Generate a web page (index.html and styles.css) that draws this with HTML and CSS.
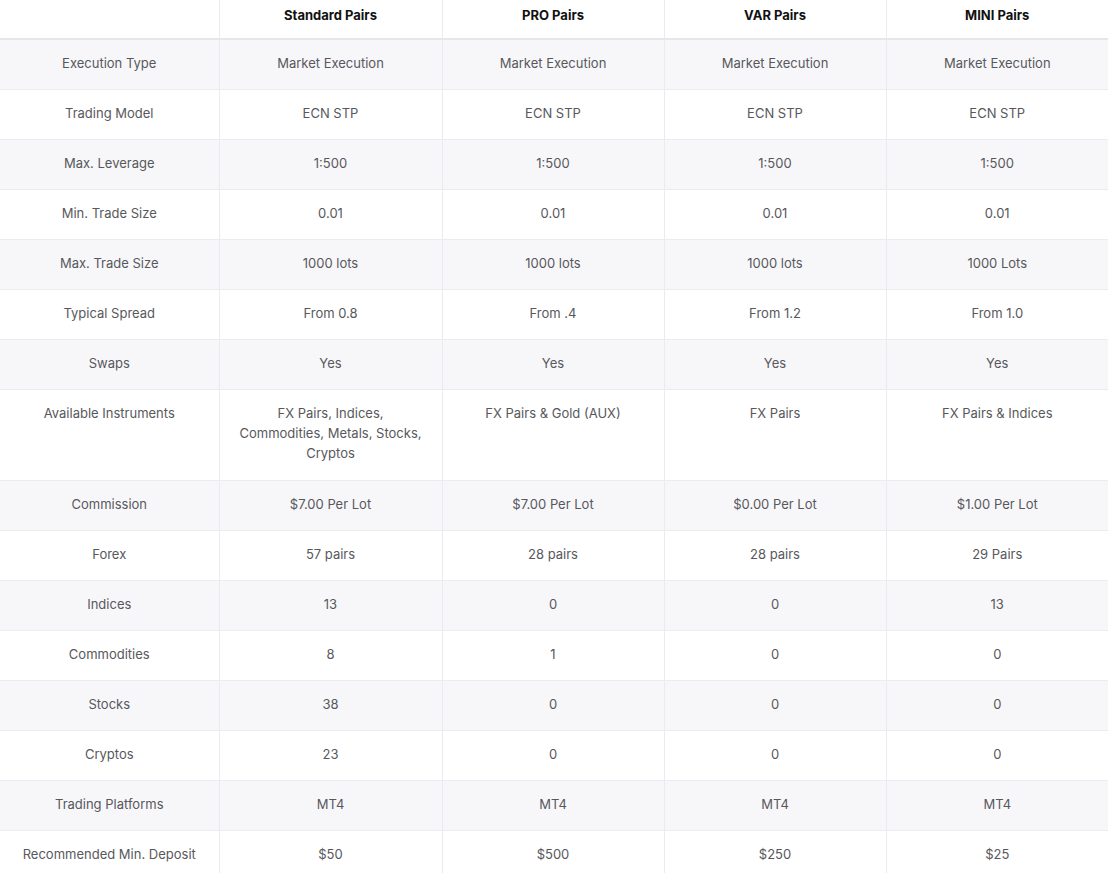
FILE: index.html
```html
<!DOCTYPE html>
<html>
<head>
<meta charset="utf-8">
<link rel="stylesheet" href="styles.css">
</head>
<body>
<table class="cmp">
  <colgroup>
    <col class="c0"><col class="c1"><col class="c2"><col class="c2"><col class="c2">
  </colgroup>
  <thead>
    <tr>
      <th></th>
      <th>Standard Pairs</th>
      <th>PRO Pairs</th>
      <th>VAR Pairs</th>
      <th>MINI Pairs</th>
    </tr>
  </thead>
  <tbody>
    <tr class="alt"><td>Execution Type</td><td>Market Execution</td><td>Market Execution</td><td>Market Execution</td><td>Market Execution</td></tr>
    <tr><td>Trading Model</td><td>ECN STP</td><td>ECN STP</td><td>ECN STP</td><td>ECN STP</td></tr>
    <tr class="alt"><td>Max. Leverage</td><td>1:500</td><td>1:500</td><td>1:500</td><td>1:500</td></tr>
    <tr><td>Min. Trade Size</td><td>0.01</td><td>0.01</td><td>0.01</td><td>0.01</td></tr>
    <tr class="alt"><td>Max. Trade Size</td><td>1000 lots</td><td>1000 lots</td><td>1000 lots</td><td>1000 Lots</td></tr>
    <tr><td>Typical Spread</td><td>From 0.8</td><td>From .4</td><td>From 1.2</td><td>From 1.0</td></tr>
    <tr class="alt"><td>Swaps</td><td>Yes</td><td>Yes</td><td>Yes</td><td>Yes</td></tr>
    <tr class="tall"><td>Available Instruments</td><td>FX Pairs, Indices,<br>Commodities, Metals, Stocks,<br>Cryptos</td><td>FX Pairs &amp; Gold (AUX)</td><td>FX Pairs</td><td>FX Pairs &amp; Indices</td></tr>
    <tr class="alt"><td>Commission</td><td>$7.00 Per Lot</td><td>$7.00 Per Lot</td><td>$0.00 Per Lot</td><td>$1.00 Per Lot</td></tr>
    <tr><td>Forex</td><td>57 pairs</td><td>28 pairs</td><td>28 pairs</td><td>29 Pairs</td></tr>
    <tr class="alt"><td>Indices</td><td>13</td><td>0</td><td>0</td><td>13</td></tr>
    <tr><td>Commodities</td><td>8</td><td>1</td><td>0</td><td>0</td></tr>
    <tr class="alt"><td>Stocks</td><td>38</td><td>0</td><td>0</td><td>0</td></tr>
    <tr><td>Cryptos</td><td>23</td><td>0</td><td>0</td><td>0</td></tr>
    <tr class="alt"><td>Trading Platforms</td><td>MT4</td><td>MT4</td><td>MT4</td><td>MT4</td></tr>
    <tr><td>Recommended Min. Deposit</td><td>$50</td><td>$500</td><td>$250</td><td>$25</td></tr>
  </tbody>
</table>
</body>
</html>
```
FILE: styles.css
```css
html, body {
  margin: 0;
  padding: 0;
  background: #ffffff;
}
body {
  font-family: "Inter", "Noto Sans", sans-serif;
}
.cmp {
  width: 1108px;
  border-collapse: collapse;
  table-layout: fixed;
}
.c0 { width: 219px; }
.c1 { width: 223px; }
.c2 { width: 222px; }
.cmp th {
  height: 38px;
  box-sizing: border-box;
  padding: 5px 10px 13px;
  line-height: 20px;
  font-size: 13px;
  font-weight: 700;
  color: #111111;
  text-align: center;
  vertical-align: top;
  border-bottom: 2px solid #e6e6ea;
  border-left: 1px solid #ebebef;
}
.cmp th:first-child { border-left: none; }
.cmp td {
  padding: 13px 10px 16px;
  line-height: 20px;
  font-size: 13px;
  color: #58585c;
  text-align: center;
  vertical-align: top;
  border-bottom: 1px solid #ececf0;
  border-left: 1px solid #ebebef;
}
.cmp td:first-child { border-left: none; }
.cmp tr.tall td { padding-bottom: 17px; }
.cmp tr.alt td { background: #f7f7fa; }
```
